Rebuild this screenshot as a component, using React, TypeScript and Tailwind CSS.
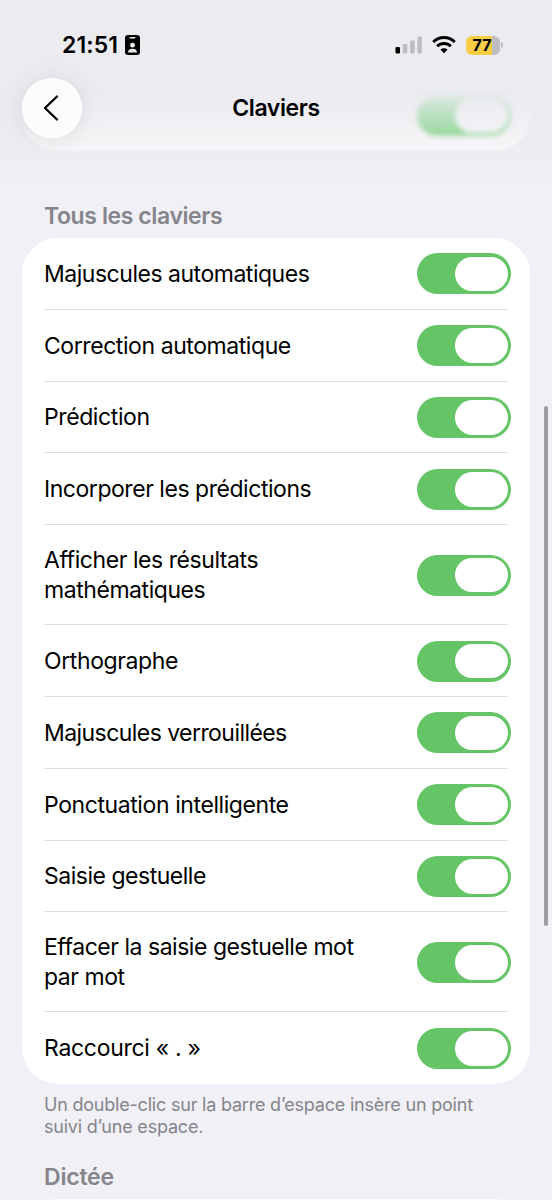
import React from 'react';

type Setting = { label: string; tall?: boolean; spacing: string };

const settings: Setting[] = [
  { label: 'Majuscules automatiques', spacing: 'tracking-[-0.48px]' },
  { label: 'Correction automatique', spacing: 'tracking-[-0.43px]' },
  { label: 'Prédiction', spacing: 'tracking-[-0.4px]' },
  { label: 'Incorporer les prédictions', spacing: 'tracking-[-0.46px]' },
  { label: 'Afficher les résultats\nmathématiques', tall: true, spacing: 'tracking-[-0.44px]' },
  { label: 'Orthographe', spacing: 'tracking-[-0.4px]' },
  { label: 'Majuscules verrouillées', spacing: 'tracking-[-0.56px]' },
  { label: 'Ponctuation intelligente', spacing: 'tracking-[-0.41px]' },
  { label: 'Saisie gestuelle', spacing: 'tracking-[-0.48px]' },
  { label: 'Effacer la saisie gestuelle mot\npar mot', tall: true, spacing: 'tracking-[-0.47px]' },
  { label: 'Raccourci « . »', spacing: 'tracking-[-0.3px]' },
];

function Toggle() {
  return (
    <div className="flex h-[41px] w-[94px] shrink-0 items-center justify-end rounded-full bg-[#65c466] pr-[3.5px]">
      <div className="h-[34.5px] w-[52.5px] rounded-full bg-white" />
    </div>
  );
}

function StatusBar() {
  return (
    <div className="flex h-[78px] items-start justify-between pt-[34px] pr-[49px] pl-[62px]">
      <div className="flex h-[22px] items-center">
        <span className="w-[63px] text-[23px] leading-[22px] font-semibold tracking-[0.1px] whitespace-nowrap">21:51</span>
        <svg width="15" height="20" viewBox="0 0 15 20">
          <rect width="15" height="20" rx="3" fill="#000" />
          <rect x="4.5" y="2" width="6" height="1.5" rx="0.75" fill="#ececf1" />
          <circle cx="7.5" cy="10.2" r="2.4" fill="#ececf1" />
          <path d="M3 17.4c0-2.6 2-3.7 4.5-3.7s4.5 1.1 4.5 3.7z" fill="#ececf1" />
        </svg>
      </div>
      <div className="flex h-[22px] items-center">
        <svg width="27" height="18" viewBox="0 0 27 18">
          <rect x="0.5" y="11" width="4.5" height="6.5" rx="1.3" fill="#000" />
          <rect x="7.8" y="8" width="4.5" height="9.5" rx="1.3" fill="#bdbdc2" />
          <rect x="15.1" y="4.5" width="4.5" height="13" rx="1.3" fill="#bdbdc2" />
          <rect x="22.4" y="0.5" width="4.5" height="17" rx="1.3" fill="#bdbdc2" />
        </svg>
        <svg className="ml-[10px]" width="24" height="18" viewBox="0 0 24 18" fill="none" stroke="#000" strokeWidth="3">
          <path d="M1.3 6.9A15.2 15.2 0 0 1 22.7 6.9" transform="translate(0 -0.9)" />
          <path d="M5.2 10.8A9.6 9.6 0 0 1 18.8 10.8" transform="translate(0 -0.6)" />
          <path d="M12 17.3L8.5 13.8A5 5 0 0 1 15.5 13.8Z" fill="#000" stroke="none" />
        </svg>
        <div className="ml-[9.5px] flex items-center">
          <div className="flex h-[19px] w-[34px] items-center justify-center overflow-hidden rounded-[6px] bg-[linear-gradient(90deg,#f8ce46_77%,#bdbdc2_77%)]">
            <span className="pr-[1px] text-[16px] leading-[19px] font-bold">77</span>
          </div>
          <div className="ml-[1.5px] h-[6px] w-[2px] rounded-r-full bg-[#bdbdc2]" />
        </div>
      </div>
    </div>
  );
}

export default function App() {
  return (
    <div className="relative isolate h-[1200px] w-[552px] overflow-hidden bg-[#f0f0f6] font-['Inter','Liberation_Sans',sans-serif] text-black">
      {/* Scrolled card fading beneath the navigation bar */}
      <div className="absolute inset-x-0 top-0 -z-10 h-[190px] bg-[linear-gradient(180deg,#ebebf0_0px,#ebebf0_130px,#f0f0f6_190px)]" />
      <div className="absolute top-[70px] left-[22px] -z-10 h-[81px] w-[508px] rounded-b-[34px] bg-[linear-gradient(180deg,#ffffff00_25%,#ffffff90_100%)] blur-[1px]" />
      <div className="absolute top-[95px] left-[417px] -z-10 blur-[2.5px]">
        <div className="flex h-[41px] w-[94px] items-center justify-end rounded-full bg-[linear-gradient(180deg,#dfe9e3_0%,#b9dfc0_50%,#98d89d_100%)] pr-[3.5px]">
          <div className="h-[34.5px] w-[53px] rounded-full bg-[linear-gradient(180deg,#ebebf0,#f3f3f6)]" />
        </div>
      </div>

      <StatusBar />

      <header className="grid h-[60px] grid-cols-[60px_1fr_60px] items-center px-[22px]">
        <button aria-label="Retour" className="flex size-[60px] items-center justify-center rounded-full border-2 border-white bg-[#fbfbfc] shadow-[0_2px_26px_rgba(0,0,0,0.09)]">
          <svg className="mr-[3px]" width="16" height="26" viewBox="0 0 16 26" fill="none" stroke="#000" strokeWidth="2.3" strokeLinecap="round" strokeLinejoin="round">
            <path d="M14 1.5L2 13L14 24.5" />
          </svg>
        </button>
        <h1 className="text-center text-[23px] leading-[30px] font-semibold tracking-[-0.4px]">Claviers</h1>
      </header>

      <main className="px-[22px] pt-[62.5px]">
        <h2 className="h-[37.5px] pl-[22px] text-[23px] leading-[30px] font-semibold tracking-[-0.4px] text-[#85858b]">Tous les claviers</h2>
        <section className="rounded-[36px] bg-white pl-[22px]">
          {settings.map((s, i) => (
            <div key={s.label} className={`relative flex items-center justify-between pr-[19px] ${s.tall ? 'h-[100px]' : 'h-[71.8px]'}`}>
              <span className={`text-[23px] leading-[30px] whitespace-pre ${s.spacing}`}>{s.label}</span>
              <Toggle />
              {i < settings.length - 1 && <div className="absolute right-[22px] bottom-0 left-0 h-px bg-[#dedee1]" />}
            </div>
          ))}
        </section>
        <p className="pt-[10px] pl-[22px] text-[18px] leading-[22px] tracking-[-0.21px] whitespace-pre text-[#85858b]">{'Un double-clic sur la barre d’espace insère un point\nsuivi d’une espace.'}</p>
        <h2 className="mt-[24px] h-[37px] pl-[22px] text-[23px] leading-[30px] font-semibold tracking-[-0.2px] text-[#85858b]">Dictée</h2>
        <section className="h-[72px] rounded-[36px] bg-white" />
      </main>

      <div className="absolute top-[406px] right-[4px] h-[520px] w-[4px] rounded-full bg-[#9d9da2]" />
    </div>
  );
}
